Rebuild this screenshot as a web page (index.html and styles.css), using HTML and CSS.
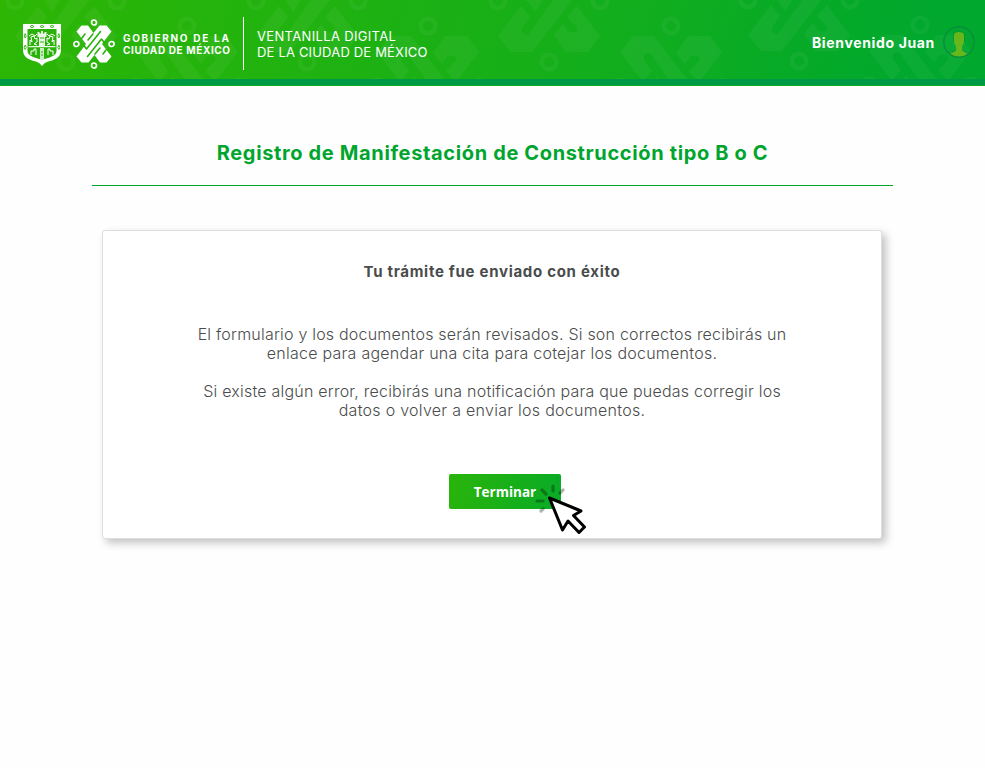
FILE: index.html
```
<!DOCTYPE html>
<html lang="es">
<head>
<meta charset="utf-8">
<title>Ventanilla Digital de la Ciudad de México</title>
<link rel="stylesheet" href="styles.css">
</head>
<body>
<header class="header">
  <svg class="pattern" width="985" height="79" viewBox="0 0 985 79" aria-hidden="true">
    <defs>
      <g id="motif">
        <path d="M-51 35L-28 5L-19 16L-27 27Q-29 34 -21 34L4 -1L23 -1L-17 51H-38ZM28 5L51 35L39 51H17L5 34L14 23L20 31Q30 33 28 26L18 16ZM-22 -1H-6L-14 11Z"/>
        <g fill="none" stroke="#fff" stroke-width="4.5"><circle cx="-51" r="7.3"/><circle cx="51" r="7.3"/><circle cy="61" r="7.3"/></g>
      </g>
    </defs>
    <g fill="#fff">
      <use href="#motif" x="66" y="1"/><use href="#motif" x="307" y="1"/><use href="#motif" x="549" y="1"/><use href="#motif" x="799" y="0"/>
      <use href="#motif" transform="translate(187 87) scale(1 -1)"/><use href="#motif" transform="translate(428 87) scale(1 -1)"/><use href="#motif" transform="translate(671 87) scale(1 -1)"/><use href="#motif" transform="translate(920 86) scale(1 -1)"/>
    </g>
  </svg>
  <div class="brand">
    <svg class="shield" width="38" height="42" viewBox="0 0 38 42">
      <path d="M0 0H38V26C38 34 31 36 25 37.500Q21 38.500 19 42Q17 38.500 13 37.500C7 36 0 34 0 26Z" fill="#fff"/>
      <path d="M4.500 5H33.500V27C33.500 32 26 34 19 35.500C12 34 4.500 32 4.500 27Z" fill="#2ab20b"/>
      <path d="M14.500 8H16.500V9.500H18V7H20V9.500H21.500V8H23.500V13H22V22H32.500V23.200H5.500V22H16V13H14.500Z" fill="#fff" fill-opacity=".9"/>
      <path d="M17 24H21V35L19 35.500L17 35Z" fill="#fff" fill-opacity=".75"/>
      <path d="M7 21V16L9 18L8 13L11 12L12 15L14 14V18L11 20L14 21M31 21V16L29 18L30 13L27 12L26 15L24 14V18L27 20L24 21M6 12L9 10L12 12L14 10M32 12L29 10L26 12L24 10M8 31V27H11V25H13V31M30 31V27H27V25H25V31" fill="none" stroke="#fff" stroke-width="1"/>
      <path d="M17 18H21M17 14H21M18 28H20M18 31H20" stroke="#2ab20b" stroke-width="1"/>
      <g fill="none" stroke="#2ab20b" stroke-width=".9"><path d="M7 2.500L9 1.300L11 2.500L9 3.700ZM17 2.500L19 1.300L21 2.500L19 3.700ZM27 2.500L29 1.300L31 2.500L29 3.700ZM2.200 9.500L3.200 12L2.200 14L1.200 12ZM35.800 9.500L36.800 12L35.800 14L34.800 12ZM2.200 21L3.200 23.500L2.200 25.500L1.200 23.500ZM35.800 21L36.800 23.500L35.800 25.500L34.800 23.500Z"/></g>
    </svg>
    <svg class="emblem" width="42" height="50" viewBox="-21 -25 42 50">
      <g fill="none" stroke="#fff" stroke-width="1.700"><circle cx="-17.600" r="2.500"/><circle cx="17.600" r="2.500"/><circle cy="-21.500" r="2.500"/><circle cy="21.500" r="2.500"/></g>
      <path d="M-17.500 -12.500L-12.500 -18.500H-6L-.5 -11L5.500 -18.500H12.500L17.500 -12.500L8 0L17.500 12.500L12.500 18.500H6L.5 11L-5.500 18.500H-12.500L-17.500 12.500L-8 0Z" fill="#fff"/>
      <path d="M6.500 -12.500L-7.500 5L-10.500 1M-6.500 12.500L7.500 -5L10.500 -1M-12 -6L-9 -10M12 6L9 10M-1 -10L-6 -4M1 10L6 4" fill="none" stroke="#29b30a" stroke-width="1.600" stroke-linecap="round" stroke-linejoin="round"/>
    </svg>
    <div class="gov"><span class="gov1">GOBIERNO DE LA</span><span class="gov2">CIUDAD DE MÉXICO</span></div>
    <div class="product"><span class="prod1">VENTANILLA DIGITAL</span><span class="prod2">DE LA CIUDAD DE MÉXICO</span></div>
  </div>
  <div class="user">
    <span class="welcome">Bienvenido Juan</span>
    <svg width="32" height="32" viewBox="0 0 32 32">
      <path d="M11 9Q11 6 16 6Q21 6 21 9V15Q21 18 19 20V24Q21 26 24.500 27.500Q22 31 16 31Q10 31 7 27.500Q12 26 13 24V20Q11 18 11 15Z" fill="#67b71c"/>
      <path d="M10.500 16V9Q10.500 5.500 16 5.500T21.500 9V16M8 26Q12 26 13 23M24 26Q20 26 19 23" fill="none" stroke="#079044" stroke-width=".8"/>
      <circle cx="16" cy="16" r="15.200" fill="none" stroke="#078f3d" stroke-width="1.500"/>
    </svg>
  </div>
</header>
<main class="main">
  <h1 class="title">Registro de Manifestación de Construcción tipo B o C</h1>
  <section class="card">
    <h2 class="subtitle">Tu trámite fue enviado con éxito</h2>
    <p class="copy"><span class="l1">El formulario y los documentos serán revisados. Si son correctos recibirás un</span><br><span class="l2">enlace para agendar una cita para cotejar los documentos.</span></p>
    <p class="copy"><span class="l3">Si existe algún error, recibirás una notificación para que puedas corregir los</span><br><span class="l4">datos o volver a enviar los documentos.</span></p>
    <button class="finish" type="button">Terminar
      <svg class="cursor" width="52" height="52" viewBox="0 0 52 52">
        <g stroke="#000" stroke-opacity=".3" stroke-width="3.200" stroke-linecap="round"><path d="M18 2V7M7 6L11 10M28 6L25 9M2 17H8M6 27L8 25"/></g>
        <path d="M14.500 14L46 27L38.500 31.500L49.500 43L44 48.500L33 37L27.500 46Z" fill="#fff" stroke="#000" stroke-width="3" stroke-linejoin="round"/>
      </svg>
    </button>
  </section>
</main>
</body>
</html>
```
FILE: styles.css
```
* { box-sizing: border-box; }
body { margin: 0; background: #fefefe; font-family: Inter, "Open Sans", sans-serif; color: #4a4c4c; min-height: 768px; }
span { white-space: nowrap; }
.header { position: relative; height: 86px; padding: 0 10px 0 23px; display: flex; justify-content: space-between; background: linear-gradient(to top, #0fae22 0 1px, #009946 1px 7px, transparent 7px), linear-gradient(105deg, #2db604, #16af19 55%, #00a82d 92%); color: #fff; }
.pattern { position: absolute; inset: 0; opacity: .042; }
.brand, .user { position: relative; display: flex; align-items: flex-start; }
.shield { margin-top: 24px; }
.emblem { margin: 19px 0 0 12px; }
.gov { display: flex; flex-direction: column; margin: 32px 0 0 8px; width: 119.500px; font-size: 10px; line-height: 12px; font-weight: 700; }
.gov1 { letter-spacing: 1.700px; }
.gov2 { letter-spacing: .62px; }
.product { display: flex; flex-direction: column; height: 53px; margin-top: 17px; padding: 11px 0 0 13.500px; border-left: 1px solid #fff; font-size: 13px; line-height: 16px; }
.prod1 { letter-spacing: .34px; }
.prod2 { letter-spacing: .18px; }
.user { gap: 8px; }
.welcome { margin-top: 33px; font-size: 14px; line-height: 20px; font-weight: 700; letter-spacing: .65px; }
.user svg { margin-top: 26px; }
.main { width: 801px; margin-left: 92px; }
.title { height: 100px; margin: 0; padding-top: 54px; border-bottom: 1px solid #00a42d; color: #00a52e; font-size: 20px; line-height: 26px; font-weight: 700; letter-spacing: .64px; text-align: center; }
.card { width: 780px; height: 309px; margin: 44px 0 0 10px; padding-top: 31px; border: 1px solid #dcdfde; border-radius: 3px; background: #fff; box-shadow: 4px 4px 8px rgba(0,0,0,.24); text-align: center; }
.subtitle { margin: 0 0 43px; font-size: 15px; line-height: 20px; font-weight: 700; letter-spacing: .71px; }
.copy { margin: 0 0 19px; font-size: 16px; line-height: 19px; font-weight: 300; }
.l1 { letter-spacing: .21px; }
.l2 { letter-spacing: .25px; }
.l3 { letter-spacing: .22px; }
.l4 { letter-spacing: .28px; }
.finish { position: relative; display: block; width: 112px; height: 35px; margin: 54px 0 0 346px; padding: 0; border: 0; border-radius: 2px; background: linear-gradient(105deg, #2ab40a, #08ab27); color: #fff; font: 700 13.500px/36px "Open Sans", sans-serif; }
.cursor { position: absolute; left: 86px; top: 10px; }
```
